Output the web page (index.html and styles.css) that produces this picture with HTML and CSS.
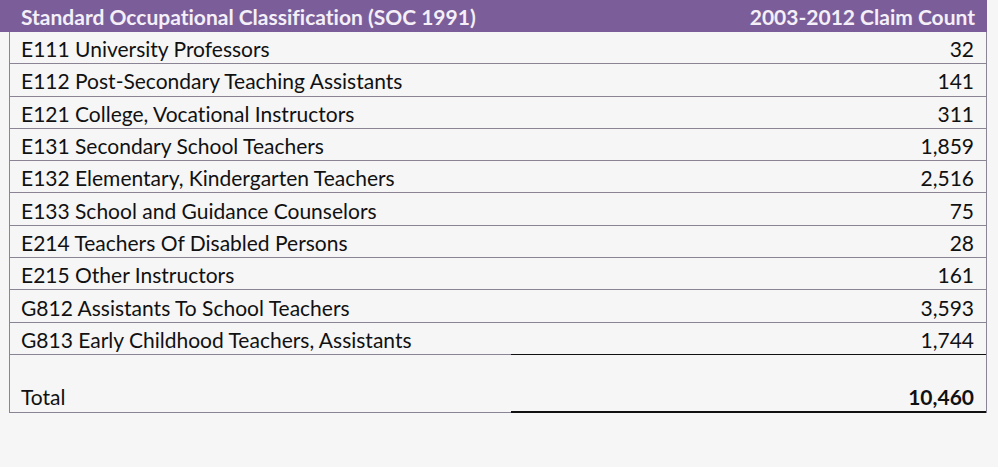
FILE: index.html
```html
<!DOCTYPE html>
<html>
<head>
<meta charset="utf-8">
<link rel="stylesheet" href="styles.css">
</head>
<body>
<div class="sheet">
  <div class="head">
    <div class="hcell">Standard Occupational Classification (SOC 1991)</div>
    <div class="hcell num">2003-2012 Claim Count</div>
  </div>
  <div class="body">
    <div class="row"><div class="c">E111 University Professors</div><div class="c num">32</div></div>
    <div class="row"><div class="c">E112 Post-Secondary Teaching Assistants</div><div class="c num">141</div></div>
    <div class="row"><div class="c">E121 College, Vocational Instructors</div><div class="c num">311</div></div>
    <div class="row"><div class="c">E131 Secondary School Teachers</div><div class="c num">1,859</div></div>
    <div class="row"><div class="c">E132 Elementary, Kindergarten Teachers</div><div class="c num">2,516</div></div>
    <div class="row"><div class="c">E133 School and Guidance Counselors</div><div class="c num">75</div></div>
    <div class="row"><div class="c">E214 Teachers Of Disabled Persons</div><div class="c num">28</div></div>
    <div class="row"><div class="c">E215 Other Instructors</div><div class="c num">161</div></div>
    <div class="row"><div class="c">G812 Assistants To School Teachers</div><div class="c num">3,593</div></div>
    <div class="row last"><div class="c">G813 Early Childhood Teachers, Assistants</div><div class="c num">1,744</div></div>
    <div class="row total"><div class="c">Total</div><div class="c num">10,460</div></div>
  </div>
</div>
</body>
</html>
```
FILE: styles.css
```css
html, body {
  margin: 0;
  padding: 0;
  background: #f6f6f6;
}
body {
  font-family: Lato, "Open Sans", sans-serif;
  font-size: 21px;
  font-variant-ligatures: none;
  color: #111;
  width: 998px;
  height: 467px;
  overflow: hidden;
}
.sheet {
  width: 987px;
}
.head {
  display: grid;
  grid-template-columns: 511px 476px;
  height: 32px;
  background: #7b5e99;
  color: #f4eff8;
  font-weight: 700;
}
.hcell {
  display: flex;
  align-items: center;
  padding-left: 12px;
  padding-top: 1px;
}
.hcell:first-child {
  padding-left: 21px;
}
.hcell.num {
  justify-content: flex-end;
  padding-right: 12px;
}
.body {
  margin-left: 9px;
  border-left: 1px solid #8a8494;
  border-right: 1px solid #8a8494;
}
.row {
  display: grid;
  grid-template-columns: 501px 1fr;
  height: 32.3px;
  box-sizing: border-box;
}
.c {
  display: flex;
  align-items: center;
  padding-left: 11px;
  border-bottom: 1px solid #8a8494;
  padding-top: 2px;
}
.c.num {
  justify-content: flex-end;
  padding-right: 12px;
  padding-left: 0;
}
.row.last .c.num {
  border-bottom-color: #111;
}
.row.total {
  height: 58.5px;
}
.row.total .c {
  align-items: flex-end;
  padding-bottom: 3px;
}
.row.total .c.num {
  border-bottom: 2px solid #111;
  font-weight: 700;
  padding-bottom: 2px;
}
```
